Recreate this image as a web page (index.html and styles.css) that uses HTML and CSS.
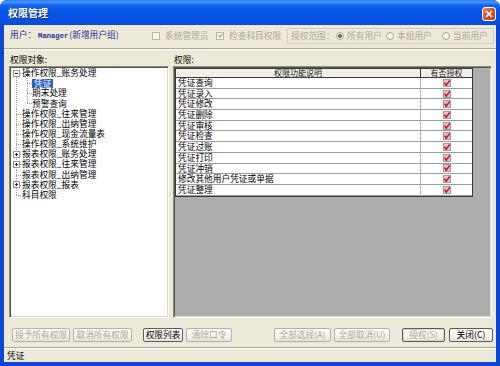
FILE: index.html
```html
<!DOCTYPE html>
<html lang="zh">
<head>
<meta charset="utf-8">
<title>权限管理</title>
<link rel="stylesheet" href="styles.css">
</head>
<body>
<div class="window">
  <div class="titlebar">
    <span class="title">权限管理</span>
    <span class="close"><svg width="8" height="8" viewBox="0 0 8 8"><path d="M1 1L7 7M7 1L1 7" stroke="#fff" stroke-width="1.6"/></svg></span>
  </div>
  <div class="client">
    <div class="toolbar">
      <span class="user">用户：<span class="mono">Manager</span>(新增用户组)</span>
      <span class="check c1"><span class="box"></span>系统管理员</span>
      <span class="check c2"><span class="box"><svg width="5" height="5" viewBox="0 0 5 5"><path d="M0.5 2.5L2 4L4.5 0.8" stroke="#a7a69b" stroke-width="1.2" fill="none"/></svg></span>检查科目权限</span>
      <div class="scope">
        <span class="scope-label">授权范围：</span>
        <span class="opt o1"><span class="radio sel"></span>所有用户</span>
        <span class="opt o2"><span class="radio"></span>本组用户</span>
        <span class="opt o3"><span class="radio"></span>当前用户</span>
      </div>
    </div>
    <div class="sep"></div>
    <div class="main">
      <div class="label">权限对象:</div>
      <div class="label">权限:</div>
      <div class="panel tree">
        <div class="row"><span class="g first"><i class="exp minus"></i></span><span class="t">操作权限_账务处理</span></div>
        <div class="row"><span class="g pipe"></span><span class="g2 tee"></span><span class="t sel">凭证</span></div>
        <div class="row"><span class="g pipe"></span><span class="g2 tee"></span><span class="t">期末处理</span></div>
        <div class="row"><span class="g pipe"></span><span class="g2 end"></span><span class="t">预警查询</span></div>
        <div class="row"><span class="g tee"></span><span class="t">操作权限_往来管理</span></div>
        <div class="row"><span class="g tee"></span><span class="t">操作权限_出纳管理</span></div>
        <div class="row"><span class="g tee"></span><span class="t">操作权限_现金流量表</span></div>
        <div class="row"><span class="g tee"></span><span class="t">操作权限_系统维护</span></div>
        <div class="row"><span class="g tee"><i class="exp plus"></i></span><span class="t">报表权限_账务处理</span></div>
        <div class="row"><span class="g tee"><i class="exp plus"></i></span><span class="t">报表权限_往来管理</span></div>
        <div class="row"><span class="g tee"></span><span class="t">报表权限_出纳管理</span></div>
        <div class="row"><span class="g tee"><i class="exp plus"></i></span><span class="t">报表权限_报表</span></div>
        <div class="row"><span class="g end"></span><span class="t">科目权限</span></div>
      </div>
      <div class="panel list">
        <div class="grid">
          <div class="h h1">权限功能说明</div><div class="h h2">有否授权</div>
          <div class="c">凭证查询</div><div class="k"><svg class="ck" width="8" height="8" viewBox="0 0 8 8"><rect x="0.5" y="0.5" width="7" height="7" fill="#d8c6ca" stroke="#a8959b"/><path d="M1.6 3.6L3.2 6.2L6.8 1.4" stroke="#d10f1c" stroke-width="1.5" fill="none"/></svg></div>
          <div class="c">凭证录入</div><div class="k"><svg class="ck" width="8" height="8" viewBox="0 0 8 8"><rect x="0.5" y="0.5" width="7" height="7" fill="#d8c6ca" stroke="#a8959b"/><path d="M1.6 3.6L3.2 6.2L6.8 1.4" stroke="#d10f1c" stroke-width="1.5" fill="none"/></svg></div>
          <div class="c">凭证修改</div><div class="k"><svg class="ck" width="8" height="8" viewBox="0 0 8 8"><rect x="0.5" y="0.5" width="7" height="7" fill="#d8c6ca" stroke="#a8959b"/><path d="M1.6 3.6L3.2 6.2L6.8 1.4" stroke="#d10f1c" stroke-width="1.5" fill="none"/></svg></div>
          <div class="c">凭证删除</div><div class="k"><svg class="ck" width="8" height="8" viewBox="0 0 8 8"><rect x="0.5" y="0.5" width="7" height="7" fill="#d8c6ca" stroke="#a8959b"/><path d="M1.6 3.6L3.2 6.2L6.8 1.4" stroke="#d10f1c" stroke-width="1.5" fill="none"/></svg></div>
          <div class="c">凭证审核</div><div class="k"><svg class="ck" width="8" height="8" viewBox="0 0 8 8"><rect x="0.5" y="0.5" width="7" height="7" fill="#d8c6ca" stroke="#a8959b"/><path d="M1.6 3.6L3.2 6.2L6.8 1.4" stroke="#d10f1c" stroke-width="1.5" fill="none"/></svg></div>
          <div class="c">凭证检查</div><div class="k"><svg class="ck" width="8" height="8" viewBox="0 0 8 8"><rect x="0.5" y="0.5" width="7" height="7" fill="#d8c6ca" stroke="#a8959b"/><path d="M1.6 3.6L3.2 6.2L6.8 1.4" stroke="#d10f1c" stroke-width="1.5" fill="none"/></svg></div>
          <div class="c">凭证过账</div><div class="k"><svg class="ck" width="8" height="8" viewBox="0 0 8 8"><rect x="0.5" y="0.5" width="7" height="7" fill="#d8c6ca" stroke="#a8959b"/><path d="M1.6 3.6L3.2 6.2L6.8 1.4" stroke="#d10f1c" stroke-width="1.5" fill="none"/></svg></div>
          <div class="c">凭证打印</div><div class="k"><svg class="ck" width="8" height="8" viewBox="0 0 8 8"><rect x="0.5" y="0.5" width="7" height="7" fill="#d8c6ca" stroke="#a8959b"/><path d="M1.6 3.6L3.2 6.2L6.8 1.4" stroke="#d10f1c" stroke-width="1.5" fill="none"/></svg></div>
          <div class="c">凭证冲销</div><div class="k"><svg class="ck" width="8" height="8" viewBox="0 0 8 8"><rect x="0.5" y="0.5" width="7" height="7" fill="#d8c6ca" stroke="#a8959b"/><path d="M1.6 3.6L3.2 6.2L6.8 1.4" stroke="#d10f1c" stroke-width="1.5" fill="none"/></svg></div>
          <div class="c">修改其他用户凭证或单据</div><div class="k"><svg class="ck" width="8" height="8" viewBox="0 0 8 8"><rect x="0.5" y="0.5" width="7" height="7" fill="#d8c6ca" stroke="#a8959b"/><path d="M1.6 3.6L3.2 6.2L6.8 1.4" stroke="#d10f1c" stroke-width="1.5" fill="none"/></svg></div>
          <div class="c">凭证整理</div><div class="k"><svg class="ck" width="8" height="8" viewBox="0 0 8 8"><rect x="0.5" y="0.5" width="7" height="7" fill="#d8c6ca" stroke="#a8959b"/><path d="M1.6 3.6L3.2 6.2L6.8 1.4" stroke="#d10f1c" stroke-width="1.5" fill="none"/></svg></div>
        </div>
      </div>
    </div>
    <div class="buttons">
      <span class="btn b1">授予所有权限</span>
      <span class="btn b2">取消所有权限</span>
      <span class="btn on b3">权限列表</span>
      <span class="btn b4">清除口令</span>
      <span class="btn b5">全部选择(A)</span>
      <span class="btn b6">全部取消(U)</span>
      <span class="btn def b7">授权(S)</span>
      <span class="btn on b8">关闭(C)</span>
    </div>
    <div class="sep sep2"></div>
    <div class="status">凭证</div>
  </div>
</div>
</body>
</html>
```
FILE: styles.css
```css
html, body {
  margin: 0;
  padding: 0;
  background: #ffffff;
}
body {
  width: 500px;
  height: 366px;
  font-family: "Noto Sans CJK SC", "Noto Sans", sans-serif;
  font-size: 8.7px;
  line-height: 11px;
  color: #000;
}
.window {
  width: 500px;
  height: 366px;
  background: #0b47d4;
  border-radius: 7px 7px 0 0;
  display: flex;
  flex-direction: column;
  overflow: hidden;
}
.titlebar {
  height: 25px;
  flex: none;
  display: flex;
  align-items: center;
  padding: 0 4px 0 8px;
  background: linear-gradient(#2a76ee 0, #4a98ff 2px, #1566ec 5px, #0757e6 10px, #0454e4 18px, #0a4bd8 25px);
}
.title {
  color: #fff;
  font-weight: 700;
  font-size: 10px;
  line-height: 12px;
  text-shadow: 1px 1px #0b2a8a;
}
.close {
  margin-left: auto;
  margin-top: 2px;
  width: 14px;
  height: 14px;
  box-sizing: border-box;
  border: 1px solid #fff;
  border-radius: 3px;
  background: linear-gradient(135deg, #ee8a6c, #d9552f 45%, #c2401c);
  display: flex;
  align-items: center;
  justify-content: center;
}
.client {
  flex: 1;
  margin: 0 4px 4px;
  background: #ece9d8;
  display: flex;
  flex-direction: column;
}
.toolbar {
  height: 23px;
  box-sizing: border-box;
  padding: 2px 0 4px 6px;
  display: flex;
  align-items: center;
  white-space: nowrap;
  color: #aca899;
}
.user {
  width: 142px;
  flex: none;
  color: #2b2f9c;
}
.mono {
  font-family: "Liberation Mono", "DejaVu Sans Mono", monospace;
  font-size: 7.2px;
  font-weight: 700;
  margin: 0 1px 0 2px;
}
.check {
  display: flex;
  align-items: center;
  flex: none;
}
.c1 { width: 64px; }
.c2 { width: 71px; }
.box {
  width: 8px;
  height: 8px;
  box-sizing: border-box;
  border: 1px solid #b9b7a9;
  background: #f4f3ee;
  margin-right: 5px;
  display: flex;
  align-items: center;
  justify-content: center;
}
.scope {
  width: 207px;
  height: 16px;
  box-sizing: border-box;
  border: 1px solid #d0cebf;
  border-radius: 2px;
  display: flex;
  align-items: center;
  padding-left: 3px;
}
.scope-label { width: 45px; }
.opt {
  display: flex;
  align-items: center;
}
.o1 { width: 50px; }
.o2 { width: 56px; }
.radio {
  width: 8px;
  height: 8px;
  box-sizing: border-box;
  border: 1px solid #a9a79a;
  border-radius: 50%;
  background: #f4f3ee;
  margin-right: 3px;
  flex: none;
}
.radio.sel {
  background: radial-gradient(circle, #6f6e65 0 1.8px, #f4f3ee 2.2px);
}
.sep {
  height: 0;
  border-top: 1px solid #aca899;
  border-bottom: 1px solid #fff;
  flex: none;
}
.main {
  display: grid;
  grid-template-columns: 160px 319px;
  grid-template-rows: 16px 252px;
  column-gap: 4px;
  padding-left: 5px;
}
.label {
  align-self: end;
  padding-bottom: 1px;
  padding-left: 1px;
}
.panel {
  box-sizing: border-box;
  border: 1px solid;
  border-color: #8e8c80 #fff #fff #8e8c80;
  box-shadow: inset 1px 1px #55544c, inset -1px -1px #dcd9c8;
  padding: 1px;
}
.tree {
  background: #fff;
}
.row {
  height: 10.17px;
  display: flex;
  align-items: center;
  white-space: nowrap;
  line-height: 10px;
}
.g, .g2 {
  flex: none;
  height: 100%;
  display: flex;
  align-items: center;
  --dv: repeating-linear-gradient(to bottom, #9a9a9a 0 1px, transparent 1px 2px);
  --dh: repeating-linear-gradient(to right, #9a9a9a 0 1px, transparent 1px 2px);
}
.g { width: 11px; }
.g2 { width: 10px; }
.tee {
  background: var(--dv) 5px 0 / 1px 100% no-repeat, var(--dh) 5px 5px / 6px 1px no-repeat;
}
.end {
  background: var(--dv) 5px 0 / 1px 5px no-repeat, var(--dh) 5px 5px / 6px 1px no-repeat;
}
.first {
  background: var(--dv) 5px 5px / 1px 100% no-repeat, var(--dh) 5px 5px / 6px 1px no-repeat;
}
.pipe {
  background: var(--dv) 5px 0 / 1px 100% no-repeat;
}
.exp {
  width: 7px;
  height: 7px;
  box-sizing: border-box;
  margin-left: 2px;
  border: 1px solid #8e9aa0;
  background: #fff;
}
.exp.minus {
  background: linear-gradient(#222, #222) center / 3px 1px no-repeat, #fff;
}
.exp.plus {
  background: linear-gradient(#222, #222) center / 3px 1px no-repeat, linear-gradient(#222, #222) center / 1px 3px no-repeat, #fff;
}
.t.sel {
  background: #2f5fbf;
  color: #fff;
  padding: 0 2px;
  line-height: 9px;
}
.list {
  background: #adadad;
}
.grid {
  width: 298px;
  box-sizing: border-box;
  border: 1px solid #3a3a3a;
  background: #fff;
  display: grid;
  grid-template-columns: 1fr 52px;
  grid-template-rows: 9px repeat(11, 10.7px);
}
.h {
  background: #f1efe4;
  border-bottom: 1px solid #3a3a3a;
  box-sizing: border-box;
  text-align: center;
  font-size: 8px;
  line-height: 8px;
  color: #222;
}
.h2 {
  border-left: 1px solid #3a3a3a;
}
.c {
  border-bottom: 1px solid #9c9c9c;
  box-sizing: border-box;
  padding-left: 2px;
  line-height: 10px;
  white-space: nowrap;
}
.k {
  border-bottom: 1px solid #9c9c9c;
  border-left: 1px solid #b4b4b4;
  box-sizing: border-box;
  display: flex;
  align-items: center;
  justify-content: center;
}
.ck { display: block; }
.buttons {
  margin-top: 10px;
  height: 14px;
  display: flex;
  padding-left: 8px;
}
.btn {
  height: 14px;
  box-sizing: border-box;
  border: 1px solid #b3b1a4;
  border-radius: 2px;
  background: linear-gradient(#fdfdfb, #f1f0ea 70%, #e2e0d4);
  color: #aca899;
  display: flex;
  align-items: center;
  justify-content: center;
  white-space: nowrap;
  line-height: 12px;
  flex: none;
}
.btn.on {
  color: #000;
  border-color: #5d5c55;
}
.btn.def {
  border-color: #5d5c55;
  box-shadow: inset 0 0 0 1px #d8d6cb;
}
.b1 { width: 58px; }
.b2 { width: 59px; margin-left: 3px; }
.b3 { width: 40px; margin-left: 11px; }
.b4 { width: 46px; margin-left: 3px; }
.b5 { width: 57px; margin-left: 42px; }
.b6 { width: 56px; margin-left: 3px; }
.b7 { width: 43px; margin-left: 12px; }
.b8 { width: 44px; margin-left: 4px; }
.sep2 {
  margin-top: 5px;
}
.status {
  height: 13px;
  line-height: 13px;
  padding-left: 3px;
}
```
